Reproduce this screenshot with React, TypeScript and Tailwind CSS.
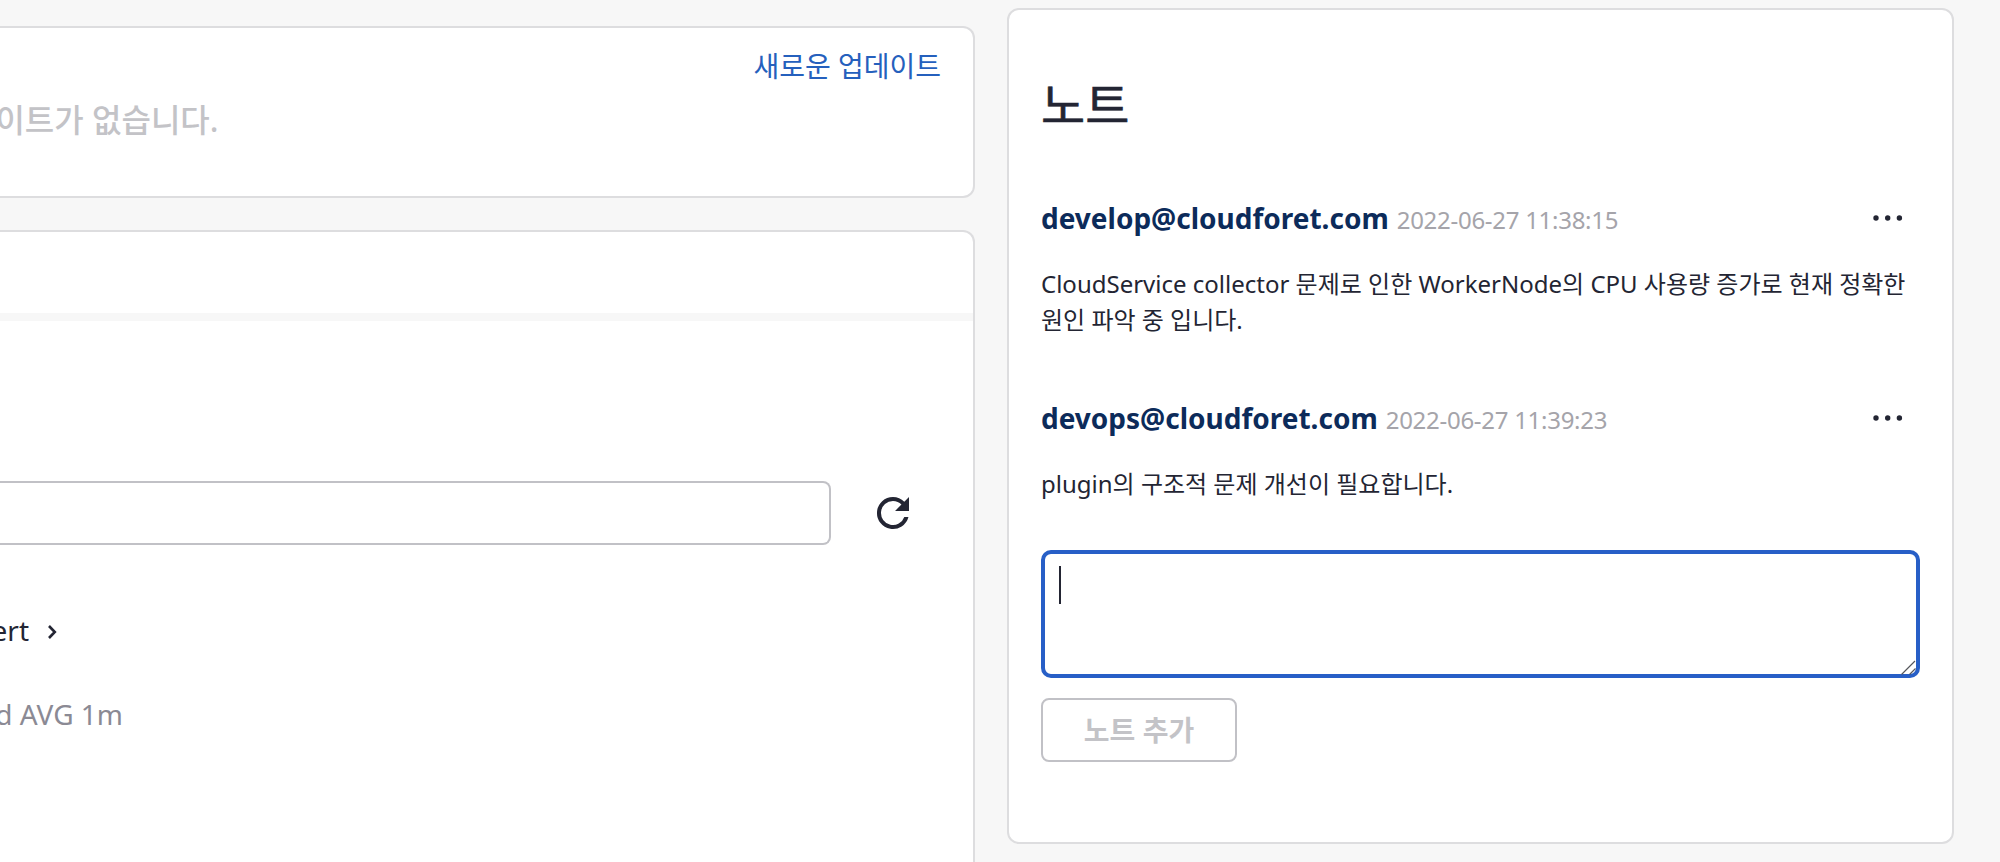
const notes = [
  {
    author: 'develop@cloudforet.com',
    time: '2022-06-27 11:38:15',
    body: 'CloudService collector 문제로 인한 WorkerNode의 CPU 사용량 증가로 현재 정확한 원인 파악 중 입니다.',
  },
  {
    author: 'devops@cloudforet.com',
    time: '2022-06-27 11:39:23',
    body: 'plugin의 구조적 문제 개선이 필요합니다.',
  },
];

function RefreshIcon() {
  return (
    <svg viewBox="0 0 24 24" className="size-12" fill="currentColor" aria-hidden="true">
      <path d="M17.65 6.35A7.96 7.96 0 0 0 12 4a8 8 0 1 0 7.73 10h-2.08A6 6 0 1 1 12 6c1.66 0 3.14.69 4.22 1.78L13 11h7V4l-2.35 2.35z" />
    </svg>
  );
}

function MoreIcon() {
  return (
    <svg viewBox="0 0 32 32" className="size-8" fill="currentColor" aria-hidden="true">
      <circle cx="4" cy="16" r="2.7" />
      <circle cx="15.7" cy="16" r="2.7" />
      <circle cx="27.4" cy="16" r="2.7" />
    </svg>
  );
}

function Note({ author, time, body }: { author: string; time: string; body: string }) {
  return (
    <li className="h-[200px]">
      <div className="flex h-10 items-center">
        <span className="text-[28px] leading-10 font-bold text-[#0c2b5a]">{author}</span>
        <span className="ml-2 pt-1 text-2xl tracking-[-0.28px] text-[#a5a4aa]">{time}</span>
        <button className="mr-4 ml-auto" aria-label="more">
          <MoreIcon />
        </button>
      </div>
      <p className="mt-7 text-2xl leading-9">{body}</p>
    </li>
  );
}

export default function App() {
  return (
    <div
      lang="ko"
      className="flex h-[862px] w-[2000px] gap-8 overflow-hidden bg-[#f7f7f7] font-['Noto_Sans','Noto_Sans_CJK_KR',sans-serif] text-[#232533]"
    >
      <main className="flex w-[975px] flex-col gap-8 pt-[26px]">
        <section className="h-[172px] shrink-0 rounded-r-xl border-2 border-l-0 border-[#dddddf] bg-white pt-[17px] pr-8">
          <div className="flex h-[42px] items-center justify-end text-[28px] text-[#2560bd]">새로운 업데이트</div>
          <div className="mt-[9px] flex h-12 w-[218.5px] items-center justify-end overflow-hidden text-[32px] font-medium whitespace-nowrap text-[#c3c3c7]">
            이트가 없습니다.
          </div>
        </section>
        <section className="flex h-[680px] shrink-0 flex-col rounded-r-xl border-2 border-l-0 border-[#dddddf] bg-white">
          <div className="h-[89px] border-b-8 border-[#f7f7f7]" />
          <div className="mt-[160px] flex h-16 items-center">
            <div className="h-16 w-[831px] rounded-r-lg border-2 border-l-0 border-[#c1c1c6]" />
            <button className="ml-[38px]" aria-label="refresh">
              <RefreshIcon />
            </button>
          </div>
          <div className="mt-[65px] flex h-10 items-center">
            <div className="flex w-[29px] justify-end overflow-hidden text-[28px]">ert</div>
            <svg viewBox="0 0 10 16" className="mt-1 ml-[18px] h-4 w-2.5" fill="none" stroke="currentColor" strokeWidth="2.6" aria-hidden="true">
              <path d="M2 2l5.8 6L2 14" />
            </svg>
          </div>
          <div className="mt-11 flex h-10 w-[123px] items-center justify-end overflow-hidden text-[28px] whitespace-nowrap text-[#8b8a94]">
            d AVG 1m
          </div>
        </section>
      </main>
      <aside className="mt-2 h-[836px] w-[947px] rounded-xl border-2 border-[#dddddf] bg-white px-8">
        <h2 className="mt-[59px] text-5xl leading-[72px] [-webkit-text-stroke:0.6px_#232533]">노트</h2>
        <ul className="mt-[57px]">
          {notes.map((note) => (
            <Note key={note.author} {...note} />
          ))}
        </ul>
        <div className="relative -mt-12 h-32">
          <textarea
            aria-label="note"
            className="block h-32 w-full resize-none rounded-[10px] border-4 border-[#275fc7] p-3 text-[28px] outline-none"
          />
          <span className="absolute top-4 left-[18px] h-[38px] w-0.5 bg-[#232533]" />
          <svg viewBox="0 0 16 15" className="absolute right-[3px] bottom-[3px] h-[15px] w-4" fill="none" stroke="#55565c" strokeWidth="1.2" aria-hidden="true">
            <path d="M.5 14.5L14 1M8.5 14.5L14.5 8.5" />
          </svg>
        </div>
        <button className="mt-5 flex h-16 w-[196px] items-center justify-center rounded-lg border-2 border-[#c1c1c6] text-[28px] font-bold text-[#c3c3c7]">
          노트 추가
        </button>
      </aside>
    </div>
  );
}
